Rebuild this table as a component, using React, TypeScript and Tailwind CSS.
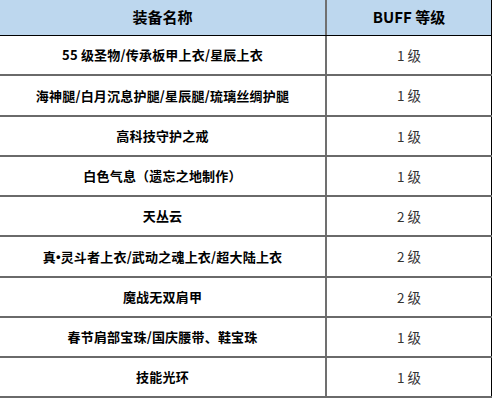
import React from "react";

const rows: { name: React.ReactNode; buff: string }[] = [
  { name: "55 级圣物/传承板甲上衣/星辰上衣", buff: "1 级" },
  { name: "海神腿/白月沉息护腿/星辰腿/琉璃丝绸护腿", buff: "1 级" },
  { name: "高科技守护之戒", buff: "1 级" },
  { name: "白色气息（遗忘之地制作）", buff: "1 级" },
  { name: "天丛云", buff: "2 级" },
  {
    name: (
      <>
        真<span style={{ fontFamily: '"Liberation Sans", sans-serif' }}>•</span>
        灵斗者上衣/武动之魂上衣/超大陆上衣
      </>
    ),
    buff: "2 级",
  },
  { name: "魔战无双肩甲", buff: "2 级" },
  { name: "春节肩部宝珠/国庆腰带、鞋宝珠", buff: "1 级" },
  { name: "技能光环", buff: "1 级" },
];

export default function App() {
  return (
    <div
      className="w-[492px] h-[400px] overflow-hidden bg-white text-black"
      style={{ fontFamily: '"Noto Sans CJK SC", "Noto Sans", sans-serif' }}
    >
      {/* header */}
      <div className="flex h-[36px] bg-[#bdd7ee] border-b border-black">
        <div className="w-[327px] border-r-2 border-[#707070] flex items-center justify-center text-[15px] font-bold">
          装备名称
        </div>
        <div className="flex-1 border-r border-black flex items-center justify-center text-[15px] font-bold">
          BUFF 等级
        </div>
      </div>

      {rows.map((r, i) => (
        <div key={i} className="flex h-[40.25px] border-b-2 border-[#6a6a6a]">
          <div className="w-[327px] border-r-2 border-[#707070] flex items-center justify-center text-[13px] font-bold tracking-[0.2px]">
            {r.name}
          </div>
          <div className="flex-1 border-r border-black flex items-center justify-center text-[13.5px] text-[#333]">
            {r.buff}
          </div>
        </div>
      ))}
    </div>
  );
}
